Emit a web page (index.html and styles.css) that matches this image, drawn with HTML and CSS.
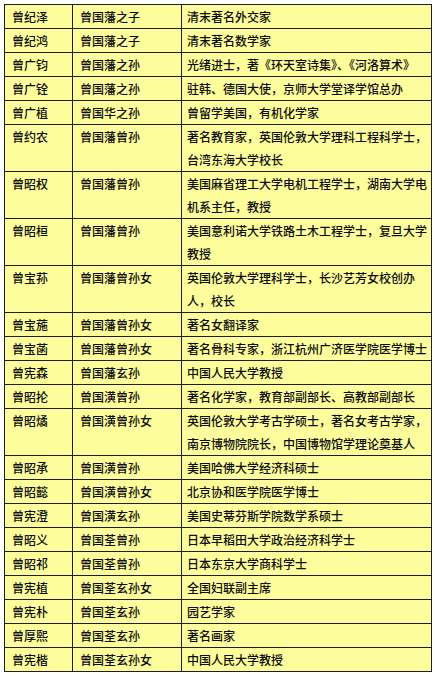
FILE: index.html
```html
<!DOCTYPE html>
<html lang="zh">
<head>
<meta charset="utf-8">
<title>曾氏后人</title>
<link rel="stylesheet" href="styles.css">
</head>
<body>
<table class="family">
<colgroup><col class="c-name"><col class="c-rel"><col class="c-desc"></colgroup>
<tbody>
<tr><td>曾纪泽</td><td>曾国藩之子</td><td>清末著名外交家</td></tr>
<tr><td>曾纪鸿</td><td>曾国藩之子</td><td>清末著名数学家</td></tr>
<tr><td>曾广钧</td><td>曾国藩之孙</td><td>光绪进士，著《环天室诗集》、《河洛算术》</td></tr>
<tr><td>曾广铨</td><td>曾国藩之孙</td><td>驻韩、德国大使，京师大学堂译学馆总办</td></tr>
<tr><td>曾广植</td><td>曾国华之孙</td><td>曾留学美国，有机化学家</td></tr>
<tr><td>曾约农</td><td>曾国藩曾孙</td><td>著名教育家，英国伦敦大学理科工程科学士，<br>台湾东海大学校长</td></tr>
<tr><td>曾昭权</td><td>曾国藩曾孙</td><td>美国麻省理工大学电机工程学士，湖南大学电<br>机系主任，教授</td></tr>
<tr><td>曾昭桓</td><td>曾国藩曾孙</td><td>美国意利诺大学铁路土木工程学士，复旦大学<br>教授</td></tr>
<tr><td>曾宝荪</td><td>曾国藩曾孙女</td><td>英国伦敦大学理科学士，长沙艺芳女校创办<br>人，校长</td></tr>
<tr><td>曾宝葹</td><td>曾国藩曾孙女</td><td>著名女翻译家</td></tr>
<tr><td>曾宝菡</td><td>曾国藩曾孙女</td><td>著名骨科专家，浙江杭州广济医学院医学博士</td></tr>
<tr><td>曾宪森</td><td>曾国藩玄孙</td><td>中国人民大学教授</td></tr>
<tr><td>曾昭抡</td><td>曾国潢曾孙</td><td>著名化学家，教育部副部长、高教部副部长</td></tr>
<tr><td>曾昭燏</td><td>曾国潢曾孙女</td><td>英国伦敦大学考古学硕士，著名女考古学家，<br>南京博物院院长，中国博物馆学理论奠基人</td></tr>
<tr><td>曾昭承</td><td>曾国潢曾孙</td><td>美国哈佛大学经济科硕士</td></tr>
<tr><td>曾昭懿</td><td>曾国潢曾孙女</td><td>北京协和医学院医学博士</td></tr>
<tr><td>曾宪澄</td><td>曾国潢玄孙</td><td>美国史蒂芬斯学院数学系硕士</td></tr>
<tr><td>曾昭义</td><td>曾国荃曾孙</td><td>日本早稻田大学政治经济科学士</td></tr>
<tr><td>曾昭祁</td><td>曾国荃曾孙</td><td>日本东京大学商科学士</td></tr>
<tr><td>曾宪植</td><td>曾国荃玄孙女</td><td>全国妇联副主席</td></tr>
<tr><td>曾宪朴</td><td>曾国荃玄孙</td><td>园艺学家</td></tr>
<tr><td>曾厚熙</td><td>曾国荃玄孙</td><td>著名画家</td></tr>
<tr><td>曾宪楷</td><td>曾国荃玄孙女</td><td>中国人民大学教授</td></tr>
</tbody>
</table>
</body>
</html>
```
FILE: styles.css
```css
html, body {
  margin: 0;
  padding: 0;
  background: #ffffff;
}
body {
  padding: 4px 0 0 4px;
  font-family: "Noto Sans CJK SC", "Noto Sans", sans-serif;
  font-size: 12px;
  font-weight: 500;
  color: #0d0d0d;
}
.family {
  border-collapse: collapse;
  table-layout: fixed;
  width: 427px;
  background: #fdfd9c;
}
.c-name { width: 68px; }
.c-rel { width: 109px; }
.c-desc { width: 250px; }
.family td {
  border: 1px solid #1e1e1e;
  padding: 0 0 0 7px;
  line-height: 23px;
  height: 23px;
  vertical-align: top;
  white-space: nowrap;
  overflow: hidden;
}
.family td:last-child {
  padding-left: 5px;
}
```
